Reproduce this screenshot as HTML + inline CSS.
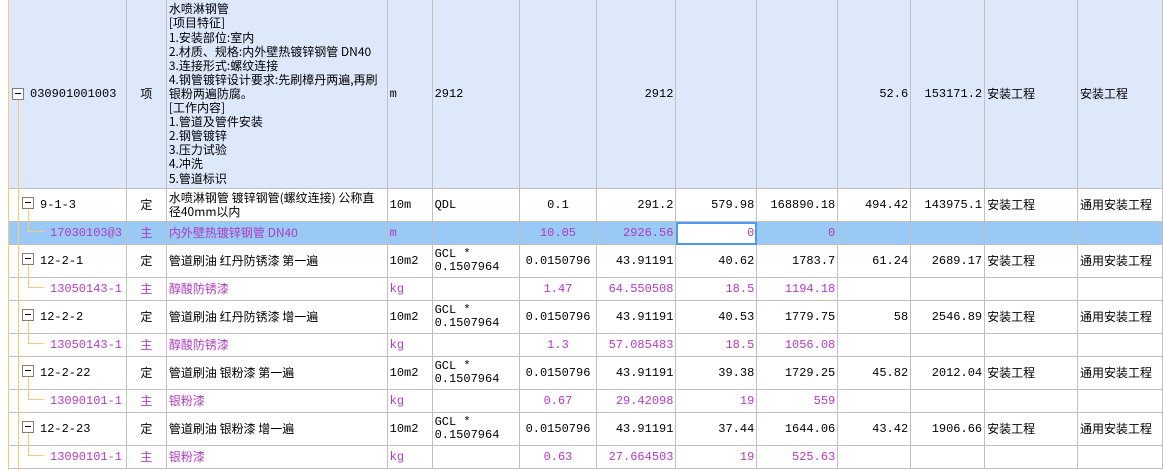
<!DOCTYPE html><html><head><meta charset="utf-8"><style>
body{margin:0;width:1163px;height:470px;overflow:hidden;background:#fff;font-family:"Liberation Mono","Noto Sans CJK SC",monospace;font-size:12px;position:relative}
table{position:absolute;left:8px;top:-1px;border-collapse:collapse;table-layout:fixed}
td{border:1px solid #c0c0c0;padding:0 2px;white-space:nowrap;overflow:hidden;color:#000;vertical-align:middle;line-height:14px}
tr.top td{background:#dde9fb}
tr.sel td{background:#99c9f5}
tr.c td{color:#b03cc0}
.r{text-align:right}.ct{text-align:center}
.w{white-space:normal;font-family:"Noto Sans CJK SC","Liberation Mono",sans-serif;line-height:14.1px}
.n{font-family:"Noto Sans CJK SC","Liberation Mono",sans-serif}
.box{position:absolute;width:10px;height:10px;border:1px solid #808080;background:#fff}
.box:after{content:"";position:absolute;left:2px;top:4px;width:6px;height:1px;background:#000}
.vl{position:absolute;width:1px;background:#ffc870}
.hl{position:absolute;height:1px;background:#ffc870}
</style></head><body>
<table>
<colgroup><col style="width:118px"><col style="width:40px"><col style="width:221px"><col style="width:45px"><col style="width:87px"><col style="width:78px"><col style="width:79px"><col style="width:81px"><col style="width:81px"><col style="width:73px"><col style="width:74px"><col style="width:93px"><col style="width:85px"></colgroup>
<tr class="top" style="height:189px"><td style="padding-left:21px">030901001003</td><td class="ct n">项</td><td class="w">水喷淋钢管<br>[项目特征]<br>1.安装部位:室内<br>2.材质、规格:内外壁热镀锌钢管 DN40<br>3.连接形式:螺纹连接<br>4.钢管镀锌设计要求:先刷樟丹两遍,再刷银粉两遍防腐。<br>[工作内容]<br>1.管道及管件安装<br>2.钢管镀锌<br>3.压力试验<br>4.冲洗<br>5.管道标识</td><td>m</td><td>2912</td><td></td><td class="r">2912</td><td></td><td></td><td class="r">52.6</td><td class="r">153171.2</td><td class="n">安装工程</td><td class="n">安装工程</td></tr>
<tr style="height:33px"><td style="padding-left:31px">9-1-3</td><td class="ct n">定</td><td class="w">水喷淋钢管 镀锌钢管(螺纹连接) 公称直径40mm以内</td><td>10m</td><td>QDL</td><td class="ct">0.1</td><td class="r">291.2</td><td class="r">579.98</td><td class="r">168890.18</td><td class="r">494.42</td><td class="r">143975.1</td><td class="n">安装工程</td><td class="n">通用安装工程</td></tr>
<tr class="sel c" style="height:23px"><td style="padding-left:41px">17030103@3</td><td class="ct n">主</td><td class="n">内外壁热镀锌钢管 DN40</td><td>m</td><td></td><td class="ct">10.05</td><td class="r">2926.56</td><td class="r" style="background:#fff;outline:2px solid #4a9af0;outline-offset:-2px">0</td><td class="r">0</td><td></td><td></td><td></td><td></td></tr>
<tr style="height:33px"><td style="padding-left:31px">12-2-1</td><td class="ct n">定</td><td class="n">管道刷油 红丹防锈漆 第一遍</td><td>10m2</td><td style="line-height:13px">GCL *<br>0.1507964</td><td class="ct">0.0150796</td><td class="r">43.91191</td><td class="r">40.62</td><td class="r">1783.7</td><td class="r">61.24</td><td class="r">2689.17</td><td class="n">安装工程</td><td class="n">通用安装工程</td></tr>
<tr class="c" style="height:23px"><td style="padding-left:41px">13050143-1</td><td class="ct n">主</td><td class="n">醇酸防锈漆</td><td>kg</td><td></td><td class="ct">1.47</td><td class="r">64.550508</td><td class="r">18.5</td><td class="r">1194.18</td><td></td><td></td><td></td><td></td></tr>
<tr style="height:33px"><td style="padding-left:31px">12-2-2</td><td class="ct n">定</td><td class="n">管道刷油 红丹防锈漆 增一遍</td><td>10m2</td><td style="line-height:13px">GCL *<br>0.1507964</td><td class="ct">0.0150796</td><td class="r">43.91191</td><td class="r">40.53</td><td class="r">1779.75</td><td class="r">58</td><td class="r">2546.89</td><td class="n">安装工程</td><td class="n">通用安装工程</td></tr>
<tr class="c" style="height:23px"><td style="padding-left:41px">13050143-1</td><td class="ct n">主</td><td class="n">醇酸防锈漆</td><td>kg</td><td></td><td class="ct">1.3</td><td class="r">57.085483</td><td class="r">18.5</td><td class="r">1056.08</td><td></td><td></td><td></td><td></td></tr>
<tr style="height:33px"><td style="padding-left:31px">12-2-22</td><td class="ct n">定</td><td class="n">管道刷油 银粉漆 第一遍</td><td>10m2</td><td style="line-height:13px">GCL *<br>0.1507964</td><td class="ct">0.0150796</td><td class="r">43.91191</td><td class="r">39.38</td><td class="r">1729.25</td><td class="r">45.82</td><td class="r">2012.04</td><td class="n">安装工程</td><td class="n">通用安装工程</td></tr>
<tr class="c" style="height:23px"><td style="padding-left:41px">13090101-1</td><td class="ct n">主</td><td class="n">银粉漆</td><td>kg</td><td></td><td class="ct">0.67</td><td class="r">29.42098</td><td class="r">19</td><td class="r">559</td><td></td><td></td><td></td><td></td></tr>
<tr style="height:33px"><td style="padding-left:31px">12-2-23</td><td class="ct n">定</td><td class="n">管道刷油 银粉漆 增一遍</td><td>10m2</td><td style="line-height:13px">GCL *<br>0.1507964</td><td class="ct">0.0150796</td><td class="r">43.91191</td><td class="r">37.44</td><td class="r">1644.06</td><td class="r">43.42</td><td class="r">1906.66</td><td class="n">安装工程</td><td class="n">通用安装工程</td></tr>
<tr class="c" style="height:23px"><td style="padding-left:41px">13090101-1</td><td class="ct n">主</td><td class="n">银粉漆</td><td>kg</td><td></td><td class="ct">0.63</td><td class="r">27.664503</td><td class="r">19</td><td class="r">525.63</td><td></td><td></td><td></td><td></td></tr>
</table>
<div class="vl" style="left:8px;top:0;height:470px"></div>
<div class="vl" style="left:18px;top:100px;height:370px"></div>
<div class="box" style="left:12px;top:88px"></div>
<div class="box" style="left:22px;top:197px"></div><div class="vl" style="left:28px;top:209px;height:22px"></div><div class="hl" style="left:28px;top:231px;width:16px"></div>
<div class="box" style="left:22px;top:253px"></div><div class="vl" style="left:28px;top:265px;height:22px"></div><div class="hl" style="left:28px;top:287px;width:16px"></div>
<div class="box" style="left:22px;top:309px"></div><div class="vl" style="left:28px;top:321px;height:22px"></div><div class="hl" style="left:28px;top:343px;width:16px"></div>
<div class="box" style="left:22px;top:365px"></div><div class="vl" style="left:28px;top:377px;height:22px"></div><div class="hl" style="left:28px;top:399px;width:16px"></div>
<div class="box" style="left:22px;top:421px"></div><div class="vl" style="left:28px;top:433px;height:22px"></div><div class="hl" style="left:28px;top:455px;width:16px"></div>
</body></html>
